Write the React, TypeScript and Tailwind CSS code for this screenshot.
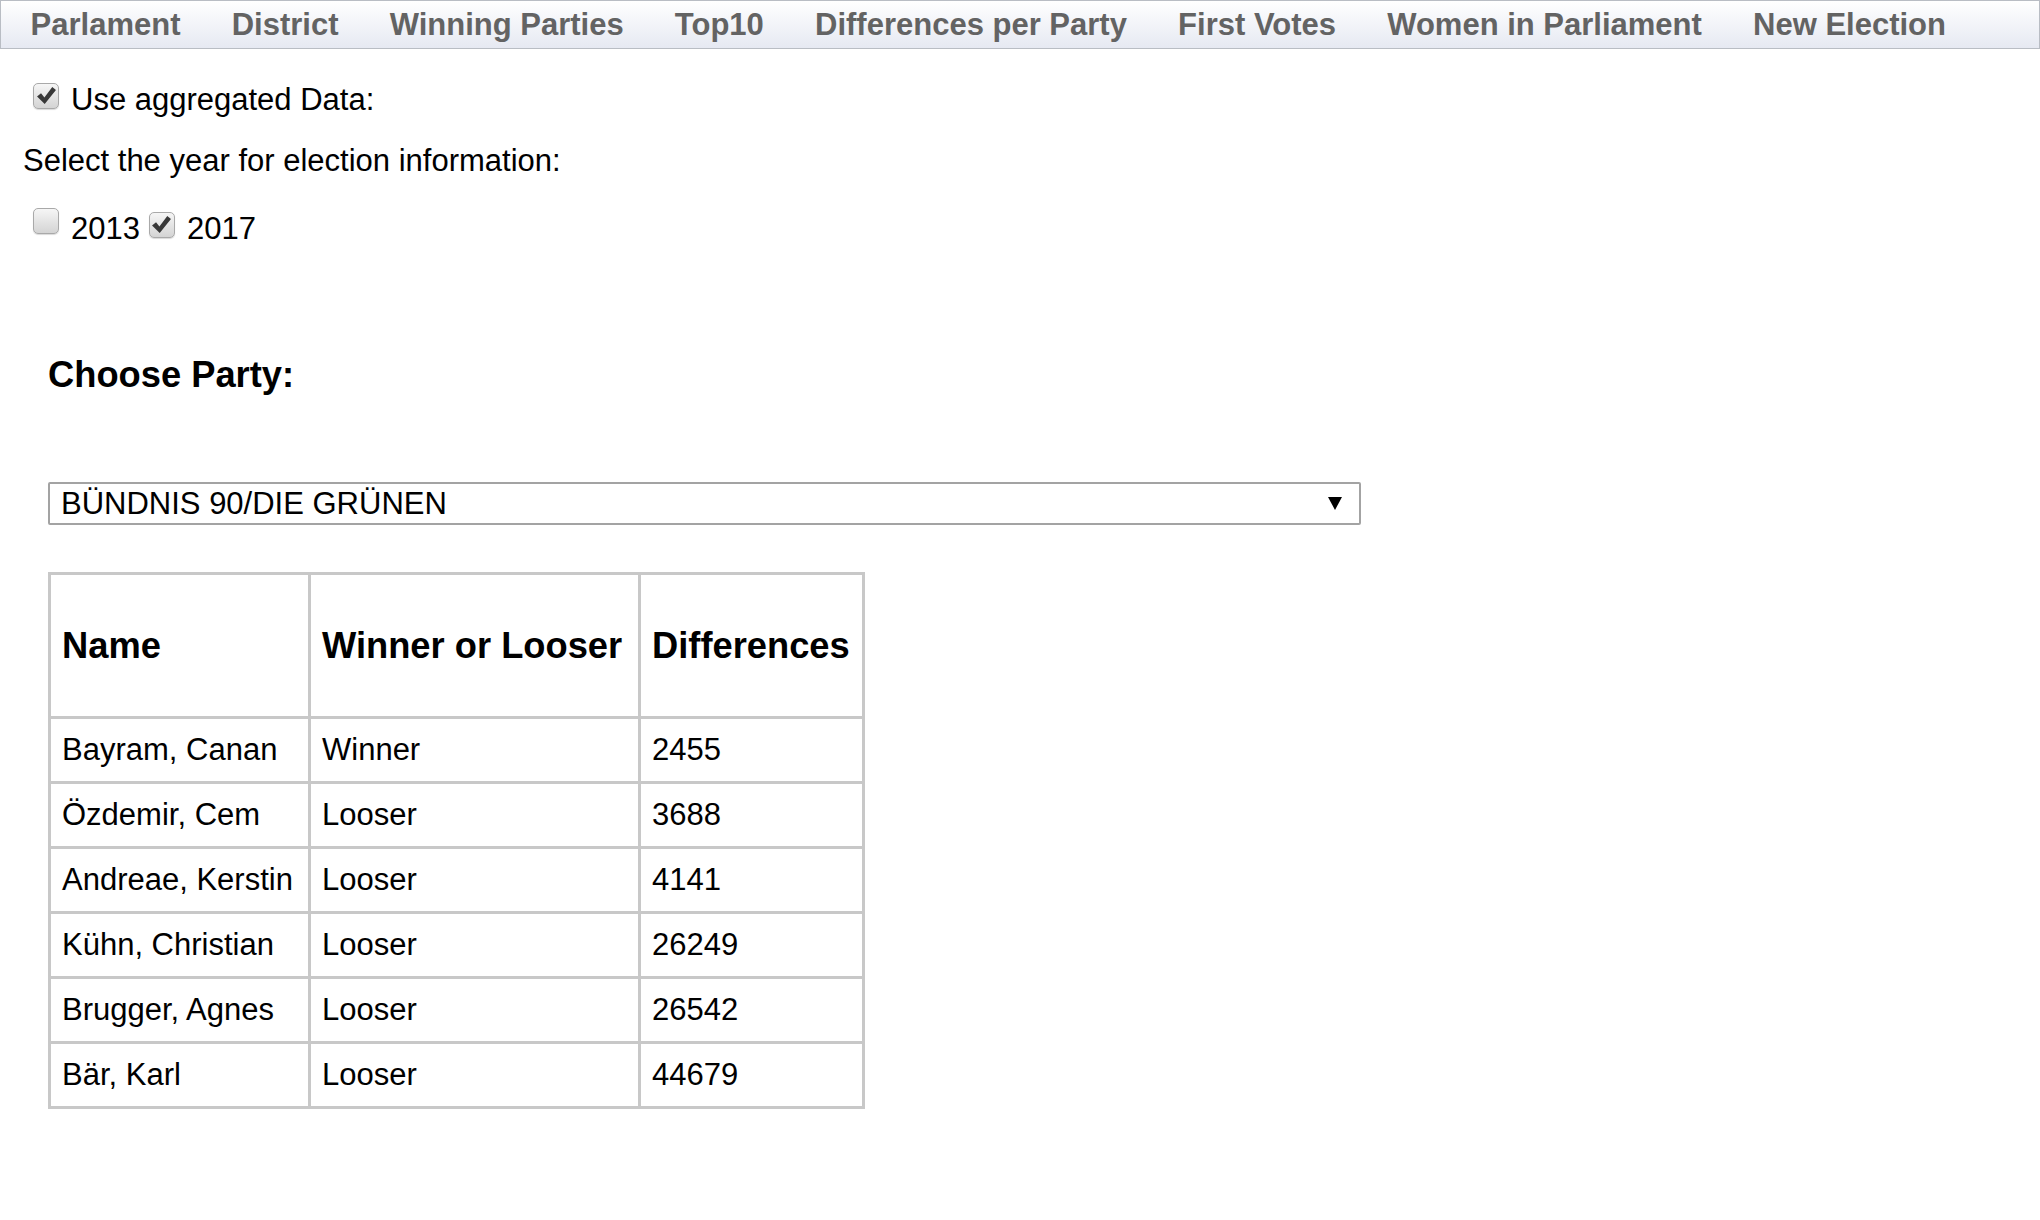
import React from "react";

const navItems = [
  "Parlament",
  "District",
  "Winning Parties",
  "Top10",
  "Differences per Party",
  "First Votes",
  "Women in Parliament",
  "New Election",
];

const rows: [string, string, string][] = [
  ["Bayram, Canan", "Winner", "2455"],
  ["Özdemir, Cem", "Looser", "3688"],
  ["Andreae, Kerstin", "Looser", "4141"],
  ["Kühn, Christian", "Looser", "26249"],
  ["Brugger, Agnes", "Looser", "26542"],
  ["Bär, Karl", "Looser", "44679"],
];

function Box({ checked }: { checked: boolean }) {
  return (
    <span className="inline-flex items-center justify-center w-[26px] h-[26px] rounded-[5px] border border-[#a9a9a9] bg-gradient-to-b from-[#f6f6f6] to-[#d4d4d4] shadow-[0_1px_1px_rgba(0,0,0,0.15)] shrink-0">
      {checked && (
        <svg width="21" height="19" viewBox="0 0 20 18">
          <path d="M1 10 L4.8 6.8 L8 11 L15.5 1 L19 3.8 L8.3 17 Z" fill="#383838" />
        </svg>
      )}
    </span>
  );
}

export default function App() {
  return (
    <div className="min-h-screen bg-white text-black font-['Liberation_Sans',Arial,sans-serif] text-[31px] leading-[36px]">
      <nav className="h-[49px] border border-[#b9bdc4] bg-gradient-to-b from-white to-[#e6e9f2] flex items-center pl-[4px]">
        {navItems.map((n) => (
          <span key={n} className="px-[25.6px] text-[31px] font-bold text-[#636363] leading-none whitespace-nowrap">
            {n}
          </span>
        ))}
      </nav>

      <div className="pl-[23px]">
        <div className="mt-[33px] flex items-center h-[36px]">
          <span className="ml-[10px] mr-[12px] -mt-[10px]">
            <Box checked />
          </span>
          <span>Use aggregated Data:</span>
        </div>

        <div className="mt-[25px] h-[36px]">Select the year for election information:</div>

        <div className="mt-[32px] flex items-center h-[36px]">
          <span className="ml-[10px] mr-[12px] -mt-[10px]">
            <Box checked={false} />
          </span>
          <span>2013</span>
          <span className="ml-[9px] mr-[12px] -mt-[10px]">
            <Box checked />
          </span>
          <span>2017</span>
        </div>

        <div className="pl-[25px]">
          <h3 className="mt-[107px] text-[36.3px] leading-[42px] font-bold">Choose Party:</h3>

          <div className="mt-[86px] w-[1313px] h-[43px] border-2 border-[#a3a3a3] rounded-[2px] flex items-center justify-between pl-[11px] pr-[17px]">
            <span>BÜNDNIS 90/DIE GRÜNEN</span>
            <svg width="14" height="13" viewBox="0 0 14 13">
              <path d="M0 0 L14 0 L7 13 Z" fill="#000" />
            </svg>
          </div>

          <table className="mt-[47px] table-fixed border-collapse w-[814px]">
            <colgroup>
              <col className="w-[260px]" />
              <col className="w-[330px]" />
              <col className="w-[224px]" />
            </colgroup>
            <thead>
              <tr className="h-[144px]">
                {["Name", "Winner or Looser", "Differences"].map((h) => (
                  <th
                    key={h}
                    className="border-[3px] border-[#c8c8c8] px-[11px] text-left align-middle text-[36.3px] leading-[42px] font-bold whitespace-nowrap"
                  >
                    {h}
                  </th>
                ))}
              </tr>
            </thead>
            <tbody>
              {rows.map((r) => (
                <tr key={r[0]} className="h-[65px]">
                  {r.map((c, i) => (
                    <td
                      key={i}
                      className="border-[3px] border-[#c8c8c8] px-[11px] align-middle whitespace-nowrap"
                    >
                      {c}
                    </td>
                  ))}
                </tr>
              ))}
            </tbody>
          </table>
        </div>
      </div>
    </div>
  );
}
